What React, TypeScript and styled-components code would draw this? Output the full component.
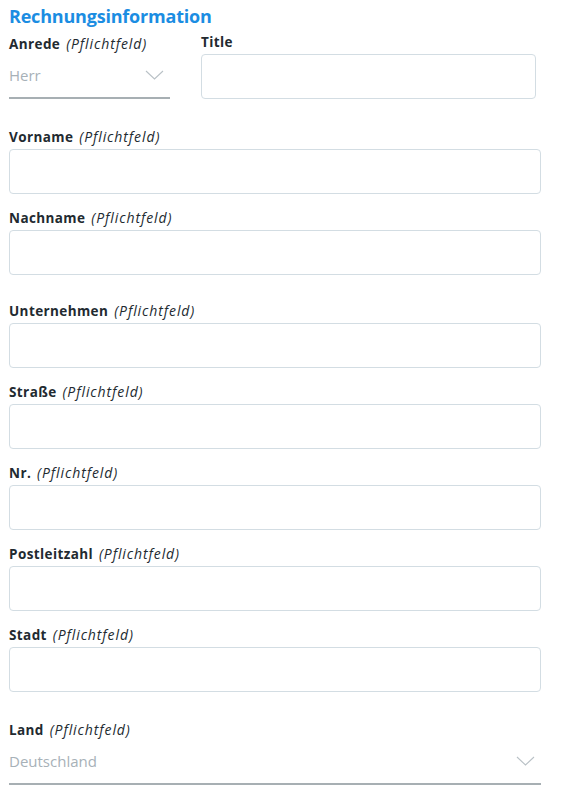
import styled, { createGlobalStyle } from 'styled-components'

const GlobalStyle = createGlobalStyle`
  body {
    margin: 0;
    background: #ffffff;
    font-family: "Open Sans", "Noto Sans", sans-serif;
  }
`

const Page = styled.div`
  width: 532px;
  padding: 5px 0 0 9px;
  box-sizing: content-box;
`

const Heading = styled.h2`
  margin: 0 0 6px;
  font-size: 18px;
  line-height: 22px;
  font-weight: 700;
  color: #1b8de2;
  letter-spacing: -0.2px;
`

const TopRow = styled.div`
  display: grid;
  grid-template-columns: 161px 335px;
  column-gap: 31px;
  margin-bottom: 29px;
`

const Field = styled.div<{ $extra?: number }>`
  display: flex;
  flex-direction: column;
  padding-top: ${p => p.$extra || 0}px;
  margin-bottom: 15px;
`

const Label = styled.label<{ $raise?: number }>`
  display: block;
  font-size: 13.5px;
  line-height: 18px;
  font-weight: 700;
  color: #222a30;
  letter-spacing: 0.4px;
  margin-bottom: 3px;
  margin-top: ${p => p.$raise || 0}px;

  em {
    font-weight: 400;
    font-style: italic;
    font-size: 14px;
    letter-spacing: 0.9px;
    margin-left: 2px;
  }
`

const Input = styled.input`
  display: block;
  width: 100%;
  height: 45px;
  box-sizing: border-box;
  border: 1px solid #d3dde3;
  border-radius: 4px;
  background: #fff;
  padding: 0 10px;
  font: inherit;
  outline: none;
`

const Select = styled.div`
  display: flex;
  align-items: center;
  justify-content: space-between;
  height: 43px;
  border-bottom: 2px solid #a7afb3;
  padding: 0 6px 3px 0;
  box-sizing: border-box;
  font-size: 15px;
  color: #a7b1b8;
`

const Chevron = () => (
  <svg width="19" height="10" viewBox="0 0 19 10" fill="none">
    <path d="M1 1 L9.5 9 L18 1" stroke="#b9c1c6" strokeWidth="1.1" />
  </svg>
)

const fields: { name: string; extra?: number }[] = [
  { name: 'Vorname' },
  { name: 'Nachname' },
  { name: 'Unternehmen', extra: 12 },
  { name: 'Straße' },
  { name: 'Nr.' },
  { name: 'Postleitzahl' },
  { name: 'Stadt' },
]

export default function App() {
  return (
    <>
      <GlobalStyle />
      <Page>
        <Heading>Rechnungsinformation</Heading>
        <TopRow>
          <div>
            <Label $raise={2}>
              Anrede <em>(Pflichtfeld)</em>
            </Label>
            <Select>
              <span>Herr</span>
              <Chevron />
            </Select>
          </div>
          <div>
            <Label>Title</Label>
            <Input type="text" />
          </div>
        </TopRow>
        {fields.map(f => (
          <Field key={f.name} $extra={f.extra}>
            <Label>
              {f.name} <em>(Pflichtfeld)</em>
            </Label>
            <Input type="text" />
          </Field>
        ))}
        <Field $extra={14}>
          <Label>
            Land <em>(Pflichtfeld)</em>
          </Label>
          <Select>
            <span>Deutschland</span>
            <Chevron />
          </Select>
        </Field>
      </Page>
    </>
  )
}
